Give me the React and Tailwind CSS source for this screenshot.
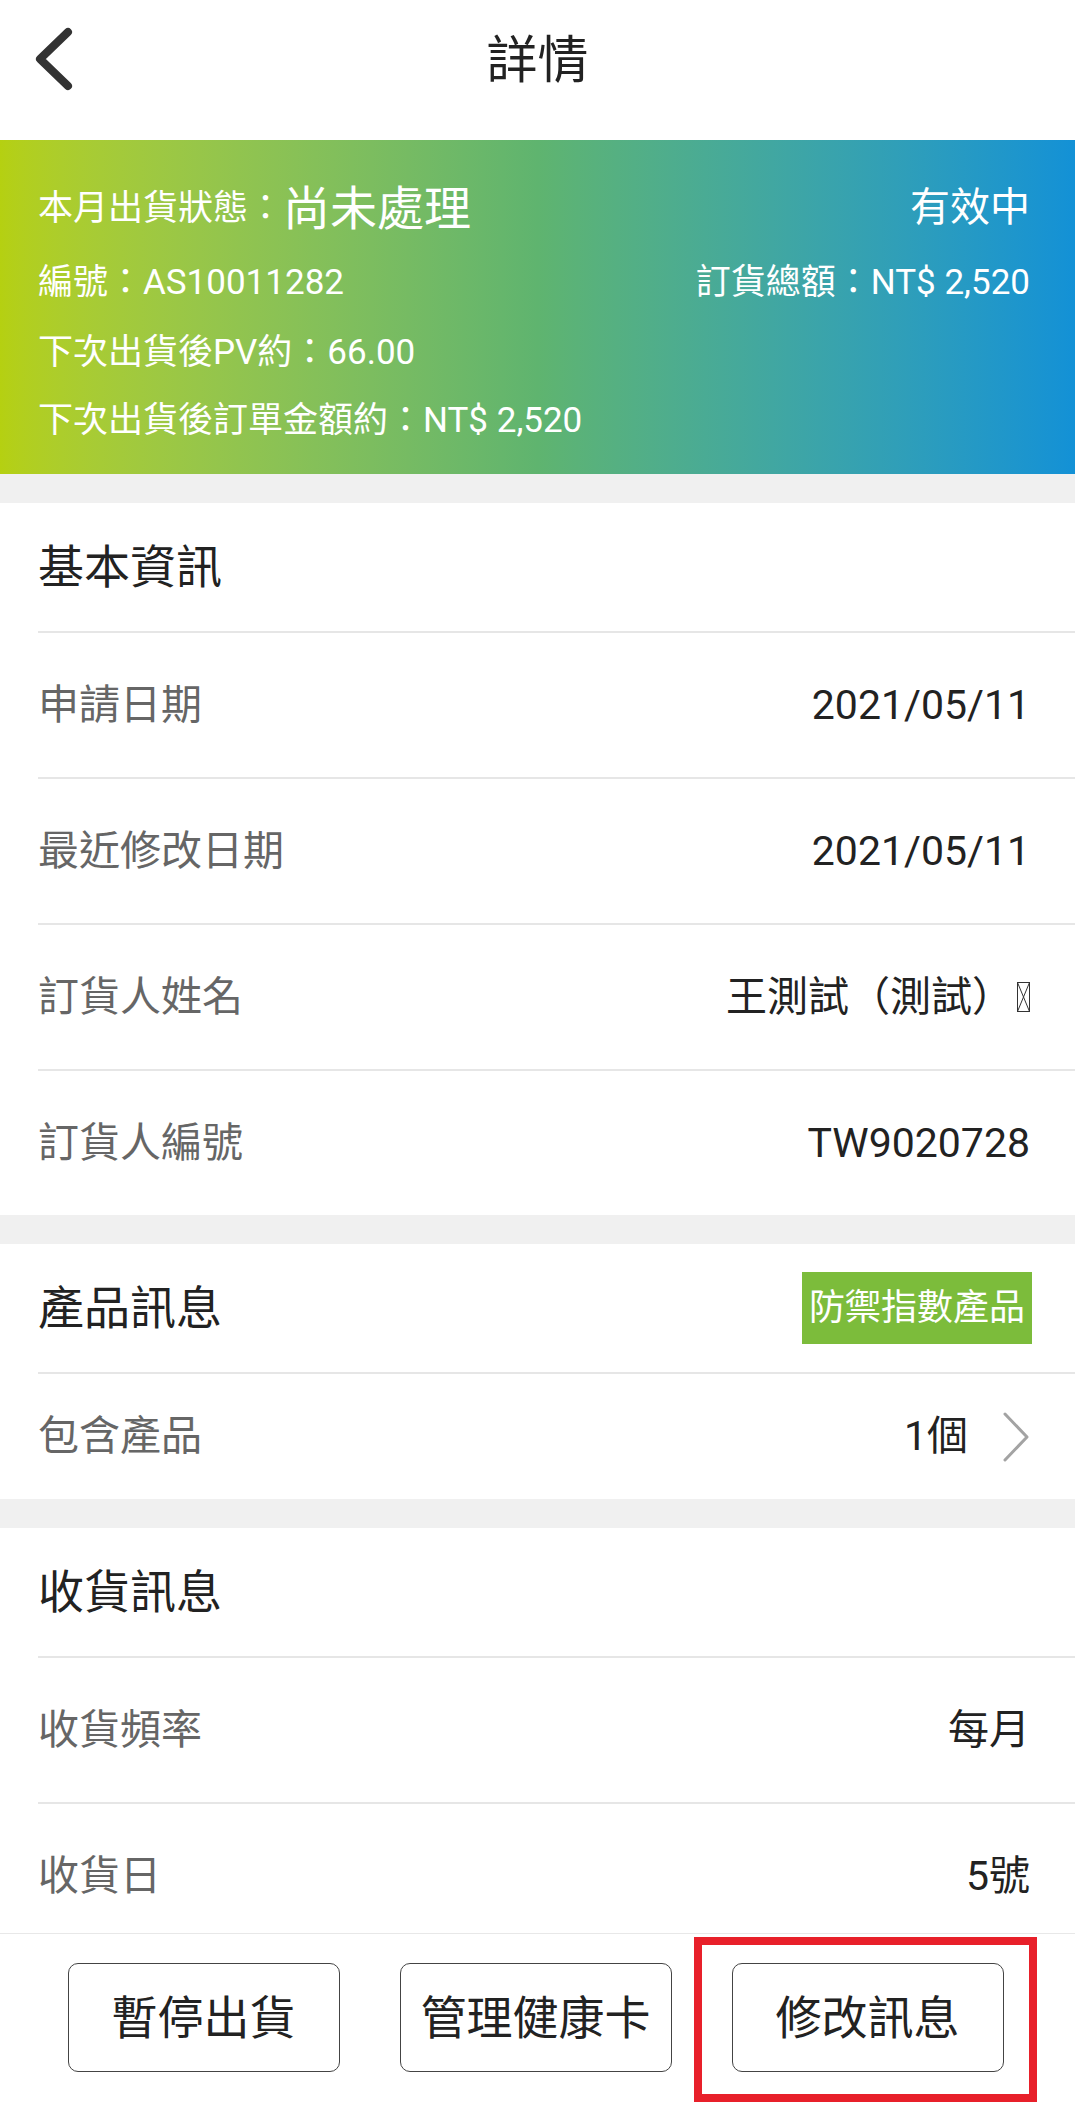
import React from 'react';

const FONT = { fontFamily: 'Roboto, "Noto Sans CJK TC", "Noto Sans", sans-serif' };

function BackIcon() {
  return (
    <svg width="40" height="64" viewBox="0 0 40 64" fill="none">
      <path d="M34 5 L6 32 L34 59" stroke="#333" strokeWidth="8" strokeLinecap="round" strokeLinejoin="round" />
    </svg>
  );
}

function ChevronRight() {
  return (
    <svg width="28" height="50" viewBox="0 0 28 50" fill="none">
      <path d="M3 2 L25 25 L3 48" stroke="#a3a3a3" strokeWidth="3" strokeLinecap="round" strokeLinejoin="round" />
    </svg>
  );
}

function Tofu() {
  return (
    <svg width="13" height="30" viewBox="0 0 13 30" fill="none" className="ml-[4px]">
      <rect x="0.5" y="0.5" width="12" height="29" stroke="#333" strokeWidth="1" />
      <path d="M0.5 0.5 L12.5 29.5 M12.5 0.5 L0.5 29.5" stroke="#333" strokeWidth="1" />
    </svg>
  );
}

function Gap() {
  return <div className="h-[29px] bg-[#f0f0f0] shrink-0"></div>;
}

function Divider() {
  return <div className="ml-[38px] h-[2px] bg-[#e6e6e6] shrink-0"></div>;
}

function SectionTitle({ children, right }) {
  return (
    <div className="h-[128px] flex items-center justify-between pl-[38px] pr-[43px] shrink-0">
      <span className="text-[46px] leading-none text-[#222]">{children}</span>
      {right}
    </div>
  );
}

function Row({ label, value, tall = true }) {
  return (
    <div className={`${tall ? 'h-[144px]' : 'h-[125px]'} flex items-center justify-between pl-[38px] pr-[45px] shrink-0`}>
      <span className="text-[41px] leading-none text-[#666]">{label}</span>
      <div className="flex items-center text-[41px] leading-none text-[#222]">{value}</div>
    </div>
  );
}

export default function App() {
  return (
    <div className="w-[1075px] h-[2125px] flex flex-col bg-white overflow-hidden" style={FONT}>
      <div className="flex-1 min-h-0 overflow-hidden flex flex-col">
        {/* Header */}
        <div className="h-[140px] shrink-0 bg-white">
          <div className="h-[120px] relative flex items-center justify-center">
            <div className="absolute left-[34px] top-[27px]">
              <BackIcon />
            </div>
            <span className="text-[51px] leading-none text-[#222]">詳情</span>
          </div>
        </div>

        {/* Status banner */}
        <div className="h-[334px] shrink-0 bg-gradient-to-r from-[#b5d011] via-[#5fb46f] to-[#1391d6] text-white pl-[38px] pr-[45px] pt-[30px] flex flex-col">
          <div className="h-[76px] flex items-center justify-between">
            <div className="flex items-center">
              <span className="text-[35px] leading-none">本月出貨狀態：</span>
              <span className="text-[47px] leading-none">尚未處理</span>
            </div>
            <span className="text-[40px] leading-none">有效中</span>
          </div>
          <div className="h-[72px] flex items-center justify-between text-[35px] leading-none">
            <span>編號：AS10011282</span>
            <span>訂貨總額：NT$ 2,520</span>
          </div>
          <div className="h-[68px] flex items-center text-[35px] leading-none">
            <span>下次出貨後PV約：66.00</span>
          </div>
          <div className="h-[68px] flex items-center text-[35px] leading-none">
            <span>下次出貨後訂單金額約：NT$ 2,520</span>
          </div>
        </div>

        <Gap />

        {/* 基本資訊 */}
        <SectionTitle>基本資訊</SectionTitle>
        <Divider />
        <Row label="申請日期" value="2021/05/11" />
        <Divider />
        <Row label="最近修改日期" value="2021/05/11" />
        <Divider />
        <Row
          label="訂貨人姓名"
          value={
            <>
              <span>王測試（測試）</span>
              <Tofu />
            </>
          }
        />
        <Divider />
        <Row label="訂貨人編號" value="TW9020728" />

        <Gap />

        {/* 產品訊息 */}
        <SectionTitle
          right={
            <span className="h-[72px] px-[7px] flex items-center bg-[#7cbc3b] text-white text-[36px] leading-none">
              防禦指數產品
            </span>
          }
        >
          產品訊息
        </SectionTitle>
        <Divider />
        <Row
          tall={false}
          label="包含產品"
          value={
            <>
              <span className="mr-[34px]">1個</span>
              <ChevronRight />
            </>
          }
        />

        <Gap />

        {/* 收貨訊息 */}
        <SectionTitle>收貨訊息</SectionTitle>
        <Divider />
        <Row label="收貨頻率" value="每月" />
        <Divider />
        <Row label="收貨日" value="5號" />
      </div>

      {/* Bottom actions */}
      <div className="h-[192px] shrink-0 border-t border-[#e8e8e8] bg-white relative">
        <div className="pt-[29px] flex justify-center gap-[60px] pr-[4px]">
          <button className="w-[272px] h-[109px] border-[1.5px] border-[#444] rounded-[10px] text-[46px] leading-none text-[#222]">
            暫停出貨
          </button>
          <button className="w-[272px] h-[109px] border-[1.5px] border-[#444] rounded-[10px] text-[46px] leading-none text-[#222]">
            管理健康卡
          </button>
          <button className="w-[272px] h-[109px] border-[1.5px] border-[#444] rounded-[10px] text-[46px] leading-none text-[#222]">
            修改訊息
          </button>
        </div>
        {/* highlight box */}
        <div className="absolute left-[694px] top-[3px] w-[343px] h-[165px] border-[8px] border-[#e8202a] pointer-events-none"></div>
      </div>
    </div>
  );
}
